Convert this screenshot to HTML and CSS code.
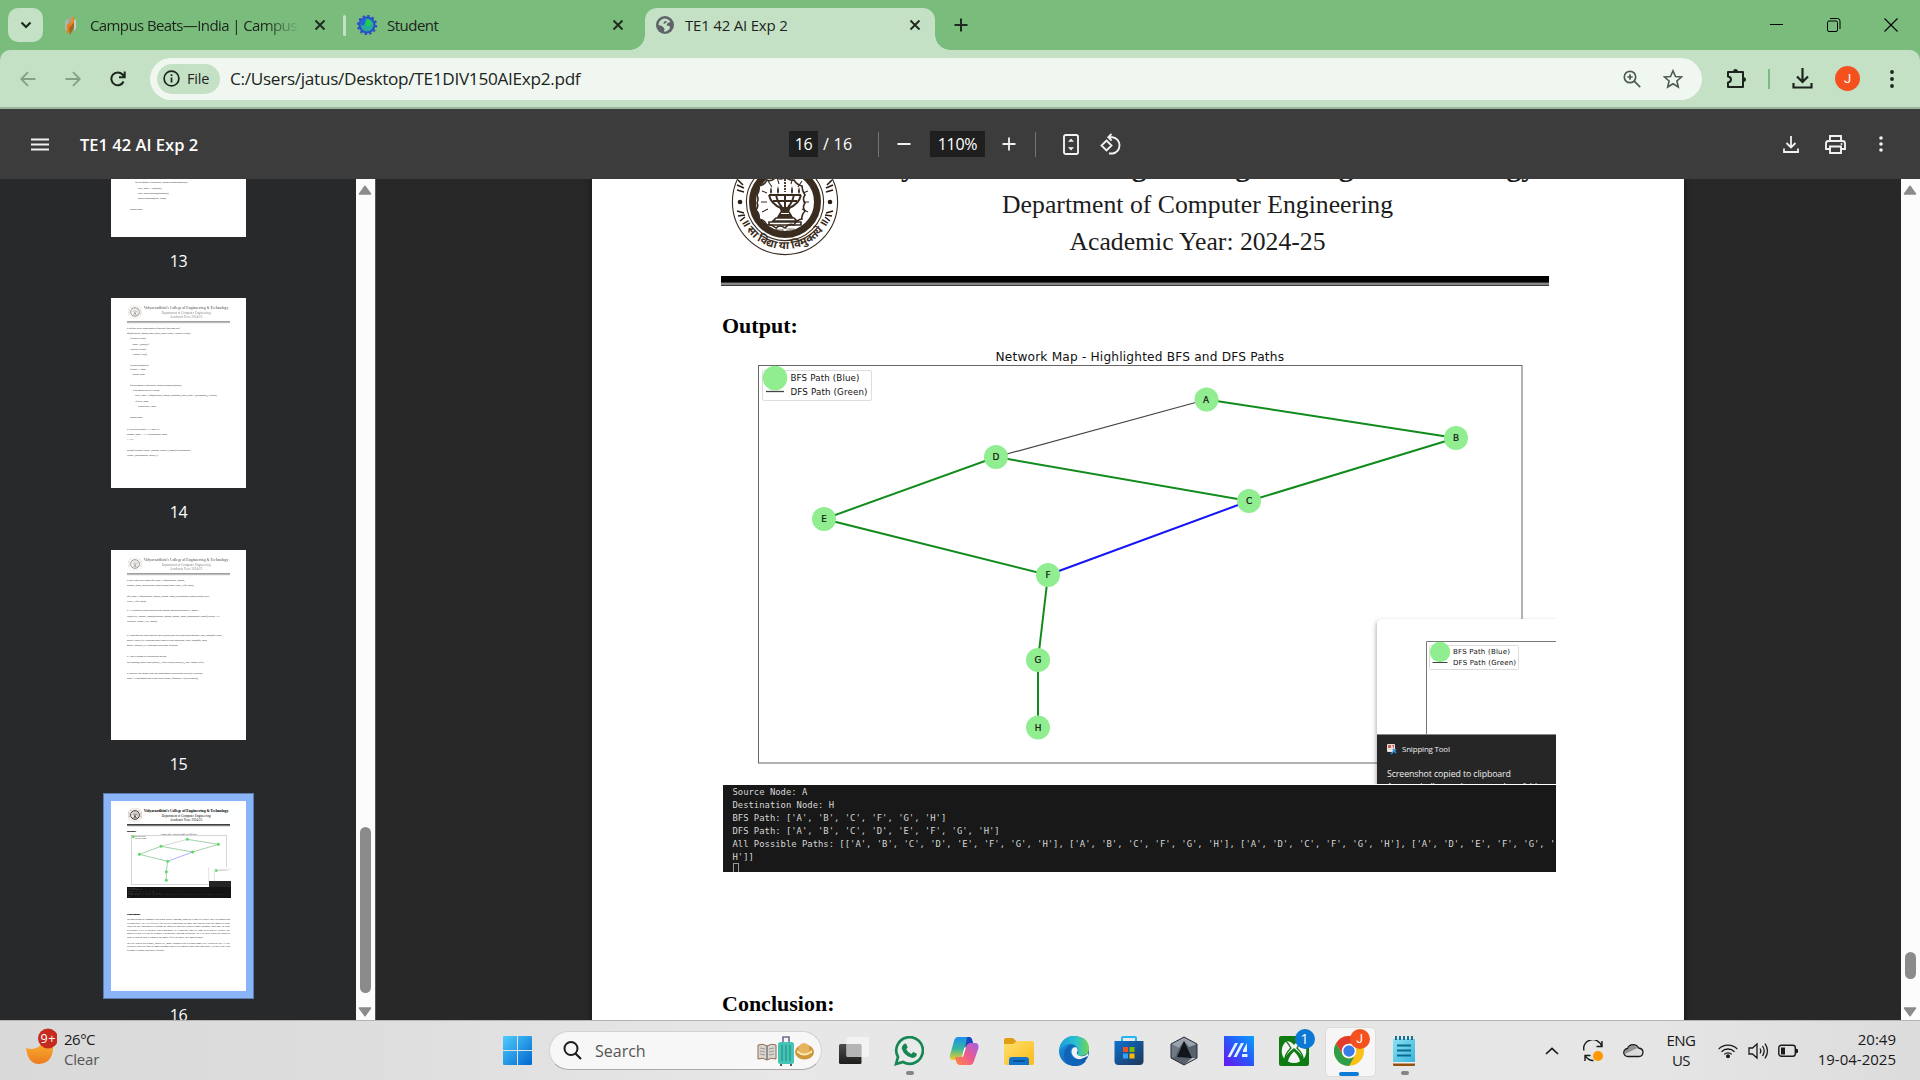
FILE: index.html
```html
<!DOCTYPE html>
<html lang="en">
<head>
<meta charset="utf-8">
<title>TE1 42 AI Exp 2</title>
<link rel="stylesheet" href="styles.css">
</head>
<body>
<svg class="defs" aria-hidden="true">
  <defs>
    <symbol id="x" viewBox="0 0 12 12"><path d="M1.5 1.5l9 9M10.5 1.5l-9 9" stroke="#1f2a20" stroke-width="1.9" fill="none"/></symbol>
    <symbol id="up" viewBox="0 0 14 10"><path d="M7 1.2L12.6 9H1.4z" fill="#8b8b8b" stroke="#8b8b8b" stroke-width="1.4" stroke-linejoin="round"/></symbol>
    <symbol id="down" viewBox="0 0 14 10"><path d="M7 8.8L12.6 1H1.4z" fill="#8b8b8b" stroke="#8b8b8b" stroke-width="1.4" stroke-linejoin="round"/></symbol>
    <symbol id="seal" viewBox="-55 -55 110 110">
      <g fill="none" stroke="#3b2c20">
        <circle r="52.6" stroke-width="1.1"/>
        <circle r="38.6" stroke-width="1.1"/>
        <circle r="32.500" stroke-width="7" />
        <path d="M-28-7q3-5 2-9q6-1 8-6q5 2 9-3q5 4 9 0q5 4 9 3q3 5 8 6q0 5 3 9q-3 4 0 8q-3 4 0 8q-4 4-3 8q-6 1-8 6q-5-2-9 3q-5-4-9 0q-5-4-9-3q-2-5-8-6q1-5-3-9q3-4 1-7q2-4 0-8z" fill="#fff" stroke="#3b2c20" stroke-width="1.6"/>
        <path d="M-24 0h6M18 0h6M-23-11l5 2M23-11l-5 2M-23 10l6-3M23 10l-6-3M-17-21l4 6M17-21l-4 6M-8-25l2 7M8-25l-2 7" stroke-width="1.1"/>
        <path d="M0-32v22" stroke-width="1.8" stroke-dasharray="2 1"/>
        <path d="M-16-7q2 9 12 13l1 4M16-7q-2 9-12 13l-1 4M-9-8q1 8 6 13M9-8q-1 8-6 13M-16-7h32M-12-1h24M0-8V10" stroke-width="2"/>
        <path d="M-4 10h8l3 5h-14zM-9 16h18l3 3h-24zM-16 20h32v3h-32z" stroke-width="1.600"/>
      </g>
      <path d="M-6 5h12l-3 6h-6zM-5 12h10l2 3h-14z" fill="#3b2c20"/>
      <path d="M-14-15q-2 5 0 7q2-2 0-7zM14-15q-2 5 0 7q2-2 0-7zM-7-16q-2 6 0 8q2-2 0-8zM7-16q-2 6 0 8q2-2 0-8z" fill="#3b2c20"/>
      <circle cx="-45" r="2.3" fill="#2a1d14"/><circle cx="45" r="2.3" fill="#2a1d14"/>
      <path d="M-48-17l7 3M-48-12l7 2M-47-22l5 5M48-17l-7 3M48-12l-7 2M47-22l-5 5M-48 9l7 2M-47 14l7-1M-45 19l5-4M48 9l-7 2M47 14l-7-1M45 19l-5-4M-37-34l5 6M37-34l-5 6M-33-38l5 6M33-38l-5 6" stroke="#2a1d14" stroke-width="1.6"/>
    </symbol>
    <symbol id="thumbhead" viewBox="0 0 405 90">
      <svg x="50" y="20" width="44" height="44" viewBox="-55 -55 110 110"><use href="#seal" x="-55" y="-55" width="110" height="110"/></svg>
      <text x="98" y="32" font-size="11.5" font-weight="700" textLength="254">Vidyavardhini's College of Engineering &amp; Technology</text>
      <text x="152" y="47" font-size="9.6" textLength="147">Department of Computer Engineering</text>
      <text x="177" y="61" font-size="9.6" textLength="97">Academic Year: 2024-25</text>
      <path d="M48 71.5h309" stroke="#000" stroke-width="4"/><path d="M48 74.500h309" stroke="#777" stroke-width="2"/>
    </symbol>
    <linearGradient id="gwin" x1="0" y1="0" x2="1" y2="1"><stop offset="0" stop-color="#4fcdfc"/><stop offset="1" stop-color="#0067cf"/></linearGradient>
    <linearGradient id="gmoon" x1="0" y1="0" x2="0" y2="1"><stop offset="0" stop-color="#fbbd3a"/><stop offset="1" stop-color="#ee7b1c"/></linearGradient>
    <linearGradient id="gfold" x1="0" y1="0" x2="1" y2="1"><stop offset="0" stop-color="#ffdf70"/><stop offset="1" stop-color="#f9bb17"/></linearGradient>
    <linearGradient id="gstore" x1="0" y1="0" x2="1" y2="1"><stop offset="0" stop-color="#0d72d0"/><stop offset="1" stop-color="#1f3557"/></linearGradient>
    <linearGradient id="gasus" x1="0" y1="1" x2="1" y2="0"><stop offset="0" stop-color="#6a16f2"/><stop offset=".5" stop-color="#2a55f8"/><stop offset="1" stop-color="#08a0ff"/></linearGradient>
    <linearGradient id="gcopa" x1="0" y1="0" x2="0" y2="1"><stop offset="0" stop-color="#1d8ff0"/><stop offset=".5" stop-color="#35b6a0"/><stop offset="1" stop-color="#f5cf28"/></linearGradient>
    <linearGradient id="gcopb" x1="1" y1="0" x2="0" y2="1"><stop offset="0" stop-color="#a061e8"/><stop offset=".5" stop-color="#ec5a92"/><stop offset="1" stop-color="#ff8b3c"/></linearGradient>
    <linearGradient id="gedge" x1="0" y1="0" x2="1" y2="0"><stop offset="0" stop-color="#1a9ddc"/><stop offset=".55" stop-color="#2cc0d0"/><stop offset="1" stop-color="#71d84d"/></linearGradient>
    <linearGradient id="gedge2" x1="0" y1="0" x2="1" y2="1"><stop offset="0" stop-color="#1e9ce4"/><stop offset="1" stop-color="#0a4a9c"/></linearGradient>
    <linearGradient id="gnote" x1="0" y1="0" x2="1" y2="1"><stop offset="0" stop-color="#8ae2f2"/><stop offset="1" stop-color="#38b4dc"/></linearGradient>
    <linearGradient id="gdark" x1="0" y1="0" x2="0" y2="1"><stop offset="0" stop-color="#4c4c4a"/><stop offset="1" stop-color="#1d1d1b"/></linearGradient>
  </defs>
</svg>

<header class="tabstrip">
  <button class="tabsearch"><svg width="12" height="8" viewBox="0 0 12 8"><path d="M1.500 1.500L6 6l4.500-4.500" fill="none" stroke="#1f2a20" stroke-width="2.200"/></svg></button>
  <div class="tab tab-one">
    <svg class="fav" width="22" height="22" viewBox="0 0 22 22"><path d="M6 7l3-2v9l-3 3z" fill="#a9b7ad"/><path d="M9 4l3-2v9l-3 3z" fill="#9aa79c"/><path d="M8 11l4-3v9l-4 3z" fill="#f07d13"/><path d="M12 5l3-3v9l-3 3z" fill="#f58a1c"/><path d="M10 14l5-6v6l-4 7z" fill="#a3672d"/><path d="M15 7l2-2v9l-2 3z" fill="#c7d0ca"/></svg>
    <span class="tabtitle faded">Campus Beats—India | Campus</span>
    <svg class="close" width="12" height="12"><use href="#x"/></svg>
  </div>
  <i class="tabsep"></i>
  <div class="tab tab-two">
    <svg class="fav" width="22" height="22" viewBox="0 0 22 22"><circle cx="11" cy="11" r="7.500" fill="#28a99b" stroke="#2a4fc4" stroke-width="2"/><circle cx="11" cy="11" r="9" fill="none" stroke="#2a4fc4" stroke-width="2.200" stroke-dasharray="2.400 2.310"/><circle cx="12" cy="9" r="3" fill="#20cf45"/><path d="M4 9q2-5 6-4l-1 5-3 2z" fill="#2563dc"/></svg>
    <span class="tabtitle t2">Student</span>
    <svg class="close" width="12" height="12"><use href="#x"/></svg>
  </div>
  <div class="tab active">
    <svg class="fav" width="22" height="22" viewBox="0 0 22 22"><circle cx="11" cy="11" r="9" fill="#5d6368"/><path d="M10 4.500c3 0 5 1 6.500 3.500l-3 1-1 2.500 3 .5.500 2c-1.500 2.500-3.500 3.800-6 3.800l.5-3.300-2.500-2.500-3.500-1c0-3 2-5.500 5.500-6.500z" fill="#c5e1c5"/><path d="M10 7.500l3-.5-1 2-2.500 1z" fill="#5d6368"/></svg>
    <span class="tabtitle t3">TE1 42 AI Exp 2</span>
    <svg class="close" width="12" height="12"><use href="#x"/></svg>
  </div>
  <svg class="newtab" width="14" height="14" viewBox="0 0 14 14"><path d="M7 .5v13M.5 7h13" stroke="#1f2a20" stroke-width="2"/></svg>
  <div class="wincontrols">
    <svg width="14" height="14" viewBox="0 0 14 14"><path d="M0 6.500h13" stroke="#000"/></svg>
    <svg width="14" height="14" viewBox="0 0 14 14"><rect x=".5" y="3" width="10" height="10.500" rx="1.500" fill="none" stroke="#000"/><path d="M3 .5h7.500q2.500 0 2.500 2.500v8" fill="none" stroke="#000"/></svg>
    <svg width="14" height="14" viewBox="0 0 14 14"><path d="M.5.500l13 13M13.500.500l-13 13" stroke="#000" stroke-width="1.100"/></svg>
  </div>
</header>

<div class="toolbarwrap">
<nav class="toolbar">
  <svg class="nav" width="16" height="16" viewBox="0 0 16 16"><path d="M15.500 8H1.500M8 1.200L1.200 8 8 14.800" fill="none" stroke="#83a186" stroke-width="1.800"/></svg>
  <svg class="nav" width="16" height="16" viewBox="0 0 16 16"><path d="M.5 8h14M8 1.200L14.800 8 8 14.800" fill="none" stroke="#83a186" stroke-width="1.800"/></svg>
  <svg class="nav" width="16" height="16" viewBox="0 0 16 16"><path d="M13.600 10.500A6.400 6.400 0 1 1 12.500 3.500L14.500 5.600M14.700.500v5.800H9" fill="none" stroke="#1c241d" stroke-width="2"/></svg>
  <div class="omnibox">
    <span class="chip"><svg width="17" height="17" viewBox="0 0 17 17"><circle cx="8.500" cy="8.500" r="7.400" fill="none" stroke="#1c241d" stroke-width="1.700"/><path d="M8.500 7.500v5M8.500 4.200v1.800" stroke="#1c241d" stroke-width="1.700"/></svg><b>File</b></span>
    <span class="url">C:/Users/jatus/Desktop/TE1DIV150AIExp2.pdf</span>
    <svg class="mag" width="18" height="18" viewBox="0 0 18 18"><circle cx="7" cy="7" r="5.700" fill="none" stroke="#4f5a52" stroke-width="1.700"/><path d="M11.200 11.200l6 6M7 4.300v5.400M4.300 7h5.400" stroke="#4f5a52" stroke-width="1.700"/></svg>
    <svg class="star" width="20" height="20" viewBox="0 0 20 20"><path d="M10 1.800l2.500 5.700 6 .5-4.600 4 1.400 6-5.300-3.200-5.300 3.200 1.400-6-4.600-4 6-.5z" fill="none" stroke="#4f5a52" stroke-width="1.600"/></svg>
  </div>
  <svg class="puzzle" width="21" height="21" viewBox="0 0 21 21"><path d="M2 4h15v15H2v-4.500q3-.5 3-3t-3-3z" fill="none" stroke="#1c241d" stroke-width="2" stroke-linejoin="round"/><path d="M7 4a2.500 3 0 0 1 5 0zM17 9a3 2.500 0 0 1 0 5z" fill="#1c241d"/></svg>
  <i class="toolsep"></i>
  <svg class="dl" width="21" height="21" viewBox="0 0 21 21"><path d="M10.500 0v13.500M5 8.500l5.500 5.500L16 8.500M1.500 15v4.500h18V15" fill="none" stroke="#1c241d" stroke-width="2.200"/></svg>
  <span class="avatar">J</span>
  <svg class="kebab" width="4" height="18" viewBox="0 0 4 18"><g fill="#1c241d"><circle cx="2" cy="2" r="1.900"/><circle cx="2" cy="9" r="1.900"/><circle cx="2" cy="16" r="1.900"/></g></svg>
</nav>
</div>

<section class="pdfbar">
  <svg class="burger" width="18" height="13" viewBox="0 0 18 13"><path d="M0 1.500h18M0 6.500h18M0 11.500h18" stroke="#f1f1f1" stroke-width="1.800"/></svg>
  <span class="pdftitle">TE1 42 AI Exp 2</span>
  <span class="field pageno">16</span><span class="pages">/ 16</span>
  <i class="psep s1"></i>
  <svg class="minus" width="14" height="14" viewBox="0 0 14 14"><path d="M.5 7h13" stroke="#f1f1f1" stroke-width="2"/></svg>
  <span class="field zoom">110%</span>
  <svg class="plus" width="14" height="14" viewBox="0 0 14 14"><path d="M7 .5v13M.5 7h13" stroke="#f1f1f1" stroke-width="1.800"/></svg>
  <i class="psep s2"></i>
  <svg class="fit" width="16" height="21" viewBox="0 0 16 21"><rect x="1" y="1" width="14" height="19" rx="1.800" fill="none" stroke="#f1f1f1" stroke-width="1.900"/><path d="M8 4.500l3 3.200H5zM8 16.500l3-3.200H5z" fill="#f1f1f1"/></svg>
  <svg class="rot" width="22" height="22" viewBox="0 0 22 22"><path d="M6.500 7.500l5 5-5 5-5-5zM11.500 1L8.300 4.200l3.300 3.500M9 4.200h3.500a7.900 8.200 0 0 1 0 16.300H9" fill="none" stroke="#f1f1f1" stroke-width="1.900"/></svg>
  <svg class="pdl" width="16" height="17" viewBox="0 0 16 17"><path d="M8 0v11M3.500 7L8 11.500 12.500 7M1 12.500V16h14v-3.500" fill="none" stroke="#f1f1f1" stroke-width="1.800"/></svg>
  <svg class="print" width="21" height="19" viewBox="0 0 21 19"><path d="M5 6V1h11v5M5 14H1V8.500Q1 6 3.500 6h14Q20 6 20 8.500V14h-4M5 11.500h11V18H5z" fill="none" stroke="#f1f1f1" stroke-width="1.900"/><circle cx="16.500" cy="9" r="1" fill="#f1f1f1"/></svg>
  <svg class="kebab2" width="4" height="16" viewBox="0 0 4 16"><g fill="#f1f1f1"><circle cx="2" cy="2" r="1.800"/><circle cx="2" cy="8" r="1.800"/><circle cx="2" cy="14" r="1.800"/></g></svg>
</section>

<main class="viewer">
  <aside class="sidebar">
    <svg class="thumb t13" width="135" height="58" viewBox="0 396 405 174"><g class="code">
      <text x="73" y="408" textLength="158">for neighbor in network_graph.neighbors(node):</text>
      <text x="81" y="426" textLength="70">new_path = list(path)</text>
      <text x="81" y="441" textLength="92">new_path.append(neighbor)</text>
      <text x="81" y="456" textLength="84">queue.append(new_path)</text>
      <text x="57" y="489" textLength="38">return None</text></g></svg>
    <span class="num">13</span>
    <svg class="thumb" width="135" height="190" viewBox="0 0 405 570"><use href="#thumbhead" width="405" height="90" opacity=".5"/><g class="code">
      <text x="48" y="93" textLength="158"># Define DFS algorithm to find the first path def</text>
      <text x="48" y="108" textLength="192">dfs(network_graph, start, goal, path=None, visited=None):</text>
      <text x="57" y="123" textLength="49">if path is None:</text>
      <text x="65" y="141" textLength="49">path = [start] if</text>
      <text x="57" y="156" textLength="50">visited is None:</text>
      <text x="65" y="171" textLength="43">visited = set()</text>
      <text x="57" y="204" textLength="55">visited.add(start)</text>
      <text x="57" y="216" textLength="49">if start == goal:</text>
      <text x="65" y="231" textLength="36">return path</text>
      <text x="57" y="264" textLength="156">for neighbor in network_graph.neighbors(start):</text>
      <text x="65" y="279" textLength="82">if neighbor not in visited:</text>
      <text x="73" y="294" textLength="244">new_path = dfs(network_graph, neighbor, goal, path + [neighbor], visited)</text>
      <text x="73" y="312" textLength="41">if new_path:</text>
      <text x="81" y="327" textLength="54">return new_path</text>
      <text x="57" y="360" textLength="38">return None</text>
      <text x="48" y="396" textLength="100"># Test with nodes "A" and "H"</text>
      <text x="48" y="411" textLength="121">source_node = "A" destination_node</text>
      <text x="48" y="426" textLength="20">= "H"</text>
      <text x="48" y="459" textLength="190">print(f"Source Node: {source_node}") print(f"Destination</text>
      <text x="48" y="474" textLength="93">Node: {destination_node}")</text></g></svg>
    <span class="num">14</span>
    <svg class="thumb" width="135" height="190" viewBox="0 0 405 570"><use href="#thumbhead" width="405" height="90" opacity=".5"/><g class="code">
      <text x="48" y="93" textLength="173"># BFS and DFS paths bfs_path = bfs(network_graph,</text>
      <text x="48" y="108" textLength="200">source_node, destination_node) print("BFS Path:", bfs_path)</text>
      <text x="48" y="141" textLength="246">dfs_path = dfs(network_graph, source_node, destination_node) print("DFS</text>
      <text x="48" y="156" textLength="57">Path:", dfs_path)</text>
      <text x="48" y="183" textLength="218"># All possible paths between the source and destination all_paths =</text>
      <text x="48" y="201" textLength="277">list(nx.all_simple_paths(network_graph, source_node, destination_node)) print("All</text>
      <text x="48" y="216" textLength="90">Possible Paths:", all_paths)</text>
      <text x="48" y="258" textLength="285"># Highlight the best path for BFS (blue) and DFS (green) highlight_best_path(bfs_path,</text>
      <text x="48" y="273" textLength="241">color="blue") # Highlight BFS path in blue highlight_best_path(dfs_path,</text>
      <text x="48" y="288" textLength="152">color="green") # Highlight DFS path in green</text>
      <text x="48" y="321" textLength="118"># Add a legend to explain the colors</text>
      <text x="48" y="339" textLength="231">plt.legend(["BFS Path (Blue)", "DFS Path (Green)"], loc="upper left")</text>
      <text x="48" y="372" textLength="227"># Display the graph with the highlighted best paths plt.title("Network</text>
      <text x="48" y="387" textLength="213">Map - Highlighted BFS and DFS Paths", fontsize=14) plt.show()</text></g></svg>
    <span class="num">15</span>
    <div class="selected"><svg class="thumb" width="135" height="190" viewBox="0 0 405 570"><use href="#thumbhead" width="405" height="90"/>
      <text x="48" y="93" font-size="8" font-weight="700" stroke="#000" stroke-width=".4">Output:</text>
      <text x="150" y="101" font-size="5" fill="#333" textLength="108" font-family="DejaVu Sans">Network Map - Highlighted BFS and DFS Paths</text>
      <rect x="61" y="103" width="286" height="147" fill="none" stroke="#999" stroke-width="1.200"/>
      <path d="M150 136L229 115" stroke="#999" stroke-width="1.200"/>
      <path d="M229 115L322 130 245 153 150 136 85 160 170 181 166 212V238" stroke="#3b9b49" fill="none" stroke-width="1.400"/>
      <path d="M170 181L245 153" stroke="#5555ff" stroke-width="1.400"/>
      <g fill="#5fd968"><circle cx="229" cy="115" r="4.500"/><circle cx="322" cy="130" r="4.500"/><circle cx="245" cy="153" r="4.500"/><circle cx="150" cy="136" r="4.500"/><circle cx="85" cy="160" r="4.500"/><circle cx="170" cy="181" r="4.500"/><circle cx="166" cy="212" r="4.500"/><circle cx="166" cy="238" r="4.500"/><circle cx="67" cy="107" r="4.500"/></g>
      <g font-size="4" fill="#222" font-family="DejaVu Sans"><text x="73" y="109">BFS Path (Blue)</text><text x="73" y="114">DFS Path (Green)</text></g>
      <rect x="293" y="197" width="67" height="60" fill="#fff"/><path d="M293 199v44M310 243v-38h50" stroke="#aaa" fill="none"/><circle cx="316" cy="209" r="4" fill="#5fd968"/><text x="322" y="210" font-size="3.500" font-family="DejaVu Sans">BFS Path (Blue)</text>
      <rect x="294" y="240" width="66" height="18" fill="#252525"/><rect x="48" y="258" width="312" height="33" fill="#141414"/>
      <g font-size="3.300" fill="#aaa" font-family="DejaVu Sans Mono"><text x="52" y="263">Source Node: A</text><text x="52" y="268">Destination Node: H</text><text x="52" y="273">BFS Path: ['A', 'B', 'C', 'F', 'G', 'H']</text><text x="52" y="278">DFS Path: ['A', 'B', 'C', 'D', 'E', 'F', 'G', 'H']</text><text x="52" y="283" textLength="304">All Possible Paths: [['A', 'B', 'C', 'D', 'E', 'F', 'G', 'H'], ['A', 'B', 'C', 'F', 'G', 'H'], ['A', 'D', 'C', 'F', 'G', 'H'], ['A', 'D', 'E', 'F', 'G', '</text><text x="52" y="288">H']]</text></g>
      <text x="48" y="342" font-size="8" font-weight="700" stroke="#000" stroke-width=".4">Conclusion:</text>
      <g font-size="8.200" fill="#222">
      <text x="48" y="357" textLength="309">In conclusion of computer network packet routing, both BFS and DFS have their strengths and</text>
      <text x="48" y="368" textLength="309">weaknesses. DFS is effective for deep exploration but may not always find the shortest path,</text>
      <text x="48" y="379" textLength="309">whereas BFS guarantees finding the shortest path but requires more memory and time in large</text>
      <text x="48" y="390" textLength="309">networks. DFS is suitable when memory is a concern, and we don't necessarily require the</text>
      <text x="48" y="400" textLength="309">shortest path. It's useful in more exploratory routing scenarios. BFS is ideal when the shortest</text>
      <text x="48" y="411" textLength="229">path is crucial and it ensures the most efficient route in terms of hops.</text>
      <text x="48" y="429" textLength="309">In real-world networks, however, more sophisticated algorithms like Dijkstra's or A* are</text>
      <text x="48" y="439" textLength="309">typically used to find the most optimal routes in terms of both time and space, as they take into</text>
      <text x="48" y="450" textLength="112">account weights and other factors.</text></g></svg></div>
    <span class="num last">16</span>
  </aside>
  <div class="scroll side"><svg width="14" height="10"><use href="#up"/></svg><i></i><svg width="14" height="10"><use href="#down"/></svg></div>

  <div class="canvas">
    <article class="page">
      <svg class="letterhead" width="1092" height="107" viewBox="592 179 1092 107">
        <use href="#seal" x="730" y="147" width="110" height="110"/>
        <path id="arc" d="M741.500 222A48.500 48.500 0 0 0 828.500 222" fill="none"/>
        <text class="motto"><textPath href="#arc" startOffset="50%" text-anchor="middle">॥ सा विद्या या विमुक्तये ॥</textPath></text>
        <text x="785" y="231" font-size="4" text-anchor="middle" fill="#3b2c20" font-family="Liberation Sans">Estd. 1999</text>
        <g fill="#1c1c1c"><text x="856" y="175.500" font-size="29.500" font-weight="700" textLength="680">Vidyavardhini's College of Engineering &amp; Technology</text>
        <text x="1002" y="213" font-size="25.700" textLength="391">Department of Computer Engineering</text>
        <text x="1069.500" y="250" font-size="25.700" textLength="256">Academic Year: 2024-25</text></g>
        <path d="M721 279h828" stroke="#000" stroke-width="6"/><path d="M721 282.500h828M721 285.500h828" stroke="#3c3c3c"/><path d="M721 284h828" stroke="#858585" stroke-width="2"/>
      </svg>
      <h2 class="out">Output:</h2>
      <svg class="chart" width="1092" height="442" viewBox="592 343 1092 442">
        <rect x="758.500" y="365.500" width="763.500" height="397.500" fill="none" stroke="#666"/>
        <text x="995.500" y="360.500" font-size="12.200" textLength="288.500">Network Map - Highlighted BFS and DFS Paths</text>
        <rect x="762.500" y="370.500" width="109" height="30" rx="1.500" fill="#fff" stroke="#ddd"/>
        <circle cx="775" cy="378" r="12.300" fill="#90ee90"/><path d="M766 391.500h18" stroke="#444" stroke-width="1.300"/>
        <text x="790.500" y="381" font-size="8.700" textLength="69">BFS Path (Blue)</text>
        <text x="790.500" y="395" font-size="8.700" textLength="77">DFS Path (Green)</text>
        <path d="M1206.500 399.500L996 457" stroke="#444" stroke-width="1.200"/>
        <path d="M1206.500 399.500L1456 438 1249 501 996 457 824 519 1048 575 1038 660V728" stroke="#118c1c" stroke-width="2" fill="none"/>
        <path d="M1048 575L1249 501" stroke="#1414f5" stroke-width="2"/>
        <g fill="#90ee90"><circle cx="1206.500" cy="399.500" r="12"/><circle cx="1456" cy="438" r="12"/><circle cx="1249" cy="501" r="12"/><circle cx="996" cy="457" r="12"/><circle cx="824" cy="519" r="12"/><circle cx="1048" cy="575" r="12"/><circle cx="1038" cy="660" r="12"/><circle cx="1038" cy="727.500" r="12"/></g>
        <g font-size="8.900" text-anchor="middle" stroke="#111" stroke-width=".2"><text x="1206" y="402.500">A</text><text x="1456" y="441">B</text><text x="1249" y="504">C</text><text x="996" y="460">D</text><text x="824" y="522">E</text><text x="1048" y="578">F</text><text x="1038" y="663">G</text><text x="1038" y="730.500">H</text></g>
        <svg x="1365" y="612" width="191" height="172" viewBox="1365 612 191 172">
          <path class="shade" d="M1377 790V624q0-5 5-5h180v171z"/>
          <path d="M1426.500 735v-93.500H1560" fill="none" stroke="#777"/>
          <rect x="1429.500" y="645.500" width="89" height="24" rx="1" fill="#fff" stroke="#ddd"/>
          <circle cx="1440" cy="652" r="10.200" fill="#90ee90"/><path d="M1432.500 662.500h15" stroke="#444"/>
          <text x="1453" y="654" font-size="7" textLength="57">BFS Path (Blue)</text>
          <text x="1453" y="665" font-size="7" textLength="63">DFS Path (Green)</text>
          <rect x="1377" y="735" width="180" height="50" fill="#262626"/><path d="M1377 734.500h180" stroke="#888"/>
          <rect x="1387" y="744" width="8" height="8" rx="1" fill="#e8e0dc"/><path d="M1388 745h3v3h-3zM1392 745h2v4" fill="#d8604c"/><path d="M1391 754l5-5M1393 749l3 4" stroke="#2f8fd8" stroke-width="1.500"/>
          <g fill="#eee" font-family="Open Sans"><text x="1402" y="751.500" font-size="8" textLength="48">Snipping Tool</text>
          <text x="1387" y="776.500" font-size="8.800" textLength="124">Screenshot copied to clipboard</text>
          <text x="1387" y="789.500" font-size="8.800" textLength="160">Automatically saved to screenshots folder.</text></g>
        </svg>
      </svg>
      <pre class="terminal">Source Node: A
Destination Node: H
BFS Path: ['A', 'B', 'C', 'F', 'G', 'H']
DFS Path: ['A', 'B', 'C', 'D', 'E', 'F', 'G', 'H']
All Possible Paths: [['A', 'B', 'C', 'D', 'E', 'F', 'G', 'H'], ['A', 'B', 'C', 'F', 'G', 'H'], ['A', 'D', 'C', 'F', 'G', 'H'], ['A', 'D', 'E', 'F', 'G', '
H']]
<i></i></pre>
      <h2 class="concl">Conclusion:</h2>
    </article>
  </div>
  <div class="scroll main"><svg width="14" height="10"><use href="#up"/></svg><i></i><svg width="14" height="10"><use href="#down"/></svg></div>
</main>

<footer class="taskbar">
  <div class="weather">
    <svg width="36" height="40" viewBox="0 0 36 40"><path d="M5 22q8 3 15-3 6-4 7-9 6 4 5 13-1 14-14 15-11 0-13-16z" fill="url(#gmoon)"/><circle cx="27" cy="12.500" r="10" fill="#c52b1e"/><text x="27" y="17" font-size="12.500" fill="#fff" text-anchor="middle" textLength="15">9+</text></svg>
    <div><span>26°C</span><span class="dim">Clear</span></div>
  </div>
  <span class="cell win"><svg width="29" height="29" viewBox="0 0 29 29"><path d="M0 1q0-1 1-1h13v14H0zM15 0h13q1 0 1 1v13H15zM0 15h14v14H1q-1 0-1-1zM15 15h14v13q0 1-1 1H15z" fill="url(#gwin)"/></svg></span>
  <div class="search">
    <svg width="19" height="19" viewBox="0 0 19 19"><circle cx="8" cy="7.500" r="6.500" fill="none" stroke="#1c1c1c" stroke-width="2"/><path d="M12.500 12.500l5.500 5.500" stroke="#1c1c1c" stroke-width="2.200"/></svg>
    <span>Search</span>
    <svg class="trip" width="58" height="32" viewBox="0 0 58 32"><path d="M1 10q5-2 9 1 4-3 9-1v14q-5-2-9 1-4-3-9-1z" fill="#d9d5cf" stroke="#8d6c50"/><path d="M10 11v14" stroke="#777" stroke-width="1.500"/><path d="M3 13l5 1M3 16l5 1M3 19l5 1M12 14l5-1M12 17l5-1M12 20l5-1" stroke="#999"/><path d="M26 8V2h6v6" fill="none" stroke="#6d6b91" stroke-width="1.600"/><rect x="21" y="7" width="16" height="22" rx="2.500" fill="#45c3b4"/><path d="M25 10v16M29 10v16M33 10v16" stroke="#259488" stroke-width="1.200"/><path d="M24 29v2M34 29v2" stroke="#465" stroke-width="2"/><ellipse cx="47.500" cy="17" rx="9.500" ry="7.500" fill="#d0963c"/><ellipse cx="47" cy="14" rx="5.500" ry="6" fill="#e5b45c"/><path d="M40 15q7 7 15 0v2.500q-8 6-15 0z" fill="#fbe8b4"/></svg>
  </div>
  <div class="apps">
    <span class="cell"><svg width="30" height="30" viewBox="0 0 30 30"><rect x="0" y="8" width="22.500" height="20" rx="1.500" fill="url(#gdark)"/><rect x="7.500" y="1" width="22.500" height="20" rx="1.500" fill="#f5f5f5" opacity=".82"/><path d="M7.500 8H21q1.500 0 1.500 1.500V21H9q-1.500 0-1.500-1.500z" fill="#b5b5b5"/></svg></span>
    <span class="cell"><svg width="30" height="30" viewBox="0 0 30 30"><path d="M2 28l2-7A13.300 13.300 0 1 1 9 26z" fill="#e9ebea" stroke="#168653" stroke-width="2.700"/><path d="M9.500 8.500q2-2 3 0l1.200 2.800q-.7 1.500-1.500 2 1.800 3.500 5.200 4.700l1.700-2q1 0 3.400 1.500 1 1-.6 3-2.200 2-5 1.100-7-2-9.100-9.100-.2-2.300 1.700-4z" fill="#168653"/></svg><i class="run"></i></span>
    <span class="cell"><svg width="30" height="30" viewBox="0 0 30 30"><path d="M9 1h10q3 0 4 4l1 5h-5q-3 0-4 4l-2 8q-1 2-4 2H4q-4 0-3-5L5 5q1-4 4-4z" fill="url(#gcopa)"/><path d="M18 1h2q3 0 3.500 4l1.500 5h-5q-3 0-4 3z" fill="#1947bf"/><path d="M21 29H11q-3 0-4-4l-1-4h5q3 0 4-4l2-6q1-4 5-4h4q4 0 3.500 5L25 25q-1 4-4 4z" fill="url(#gcopb)"/><path d="M17 11l-3 10h-1l2-8q1-2 2-2z" fill="#fff"/></svg></span>
    <span class="cell"><svg width="30" height="30" viewBox="0 0 30 30"><path d="M0 4q0-2 2-2h7l4 4v5H0z" fill="#e09e12"/><path d="M0 8h9l4-3h15q2 0 2 2v20q0 2-2 2H2q-2 0-2-2z" fill="url(#gfold)"/><path d="M5 29v-5q0-3 3-3h14q3 0 3 3v5z" fill="#1274c8"/><path d="M9 25h12" stroke="#0b4b93" stroke-width="1.800"/></svg></span>
    <span class="cell"><svg width="30" height="30" viewBox="0 0 30 30"><circle cx="15" cy="15" r="15" fill="url(#gedge2)"/><path d="M.5 13Q3 0 16 0q14 1 14 13 0 6-8 7-3 0-4-1 3-4 0-8-6-6-13-1-3 2-4.500 5z" fill="url(#gedge)"/><path d="M18 11q-7-3-7 5 1 9 10 9h6q-5 6-13 5Q4 27 5 17q2-8 9-8z" fill="#1064b8"/><path d="M17 11q-5 0-4.500 6Q15 24 22 23l7-3v-3q-3 4-8 3-4-1-3-4 2-2-1-5z" fill="#eef2f4"/></svg></span>
    <span class="cell"><svg width="30" height="30" viewBox="0 0 30 30"><path d="M8 6V2q0-1 1-1h12q1 0 1 1v4" fill="none" stroke="#21b5f1" stroke-width="2"/><path d="M.5 5h29v20q0 4-4 4h-21q-4 0-4-4z" fill="url(#gstore)"/><path d="M9 11h5v5H9z" fill="#f25022"/><path d="M15.500 11h5v5h-5z" fill="#7fba00"/><path d="M9 17.500h5v5H9z" fill="#2ea5ef"/><path d="M15.500 17.500h5v5h-5z" fill="#ffb900"/></svg></span>
    <span class="cell"><svg width="30" height="30" viewBox="0 0 30 30"><path d="M15 1l13 7v14l-13 7-13-7V8z" fill="#57616b"/><path d="M15 1l13 7-8 3-5-6-5 7-8-4z" fill="#9aa3ad"/><path d="M2 8l8 4-4 9-4 1z" fill="#707a84"/><path d="M15 5l8 17-15-1z" fill="#12161a"/><path d="M15 29l8-7 5 0z" fill="#c2c7cc"/><path d="M15 1l13 7v14l-13 7-13-7V8z" fill="none" stroke="#2a2f36"/></svg></span>
    <span class="cell"><svg width="30" height="30" viewBox="0 0 30 30"><rect width="30" height="30" fill="url(#gasus)"/><path d="M3.500 21L11 7h3L6.500 21zM9.500 21L17 7h3l-7.500 14zM19 14l4-7v9h-4z" fill="#dff3ff"/><path d="M18 18h5.500v3H18z" fill="#dff3ff"/></svg></span>
    <span class="cell"><svg width="30" height="30" viewBox="0 0 30 30"><rect width="30" height="30" rx="2" fill="#117b13"/><circle cx="15" cy="15" r="12.300" fill="#f5f5f5"/><path d="M7 5q5 0 8 4 3-4 8-4-3-3-8-3T7 5zM15 12Q5 20 5.500 24 9 29 15 29t9.500-5Q25 20 15 12z" fill="#117b13"/><path d="M15 15.500Q10 20 9 25.500q6 3 12 0Q20 20 15 15.500z" fill="#f5f5f5"/><path d="M7 5q2 2 5 7-7 7-6 12M23 5q-2 2-5 7 7 7 6 12" fill="none" stroke="#117b13" stroke-width="1.300"/></svg><b class="badge blue">1</b></span>
    <span class="cell chrome"><svg width="30" height="30" viewBox="-15 -15 30 30"><circle r="15" fill="#fbc116"/><path d="M-13-7.500A15 15 0 0 1 13-7.500H0L-6.500 3.700z" fill="#e33b2e"/><path d="M-13-7.500A15 15 0 0 0 0 15L6.500 3.800A7.500 7.500 0 0 1-6.500 3.800z" fill="#2f9e4b"/><circle r="7.300" fill="#fff"/><circle r="5.700" fill="#3b7de8"/></svg><b class="badge orange">J</b><i class="run on"></i></span>
    <span class="cell"><svg width="30" height="30" viewBox="0 0 30 30"><path d="M4 3h22v23H4z" fill="url(#gnote)"/><path d="M4 26h22v3q0 1-1 1H5q-1 0-1-1z" fill="#95500f"/><path d="M4 26h22v1.500H4z" fill="#eee"/><path d="M7 0v4M11 0v4M15 0v4M19 0v4M23 0v4" stroke="#0d6a8f" stroke-width="1.900"/><path d="M8 9.500h14M8 14.500h14M8 19.500h14" stroke="#0d6a8f" stroke-width="1.900"/></svg><i class="run"></i></span>
  </div>
  <div class="tray">
    <svg width="14" height="8" viewBox="0 0 14 8"><path d="M1 7l6-5.700L13 7" fill="none" stroke="#1a1a1a" stroke-width="1.700"/></svg>
    <svg class="sync" width="21" height="22" viewBox="0 0 21 22"><path d="M1 10.500A9 8.500 0 0 1 18.500 6M19 1v5.500h-5.500M2 21v-5.500h5.500M2.500 16.500q4 4.500 8 4" fill="none" stroke="#1a1a1a" stroke-width="1.400"/><circle cx="15" cy="16" r="5" fill="#ff9800"/></svg>
    <svg class="cloud" width="21" height="15" viewBox="0 0 21 15"><path d="M5 13.500A4 4 0 0 1 4.500 5.500 6 6 0 0 1 15.500 5Q20 5.500 20 9.500q-.5 4-4 4z" fill="#dcdcdc"/><path d="M2 11L14.500 5Q9-1 5 5.500 0 6 2 11z" fill="#929292"/><path d="M5 13.500A4 4 0 0 1 4.500 5.500 6 6 0 0 1 15.500 5Q20 5.500 20 9.500q-.5 4-4 4z" fill="none" stroke="#1a1a1a" stroke-width="1.300"/></svg>
    <div class="lang"><span>ENG</span><span>US</span></div>
    <svg class="wifi" width="20" height="16" viewBox="0 0 20 16"><path d="M.7 6a13 13 0 0 1 18.600 0M3.500 8.700a9.200 9.200 0 0 1 13 0M6.300 11.400a5.200 5.200 0 0 1 7.400 0" fill="none" stroke="#1a1a1a" stroke-width="1.300"/><circle cx="10" cy="13.300" r="2" fill="#1a1a1a"/></svg>
    <svg class="vol" width="21" height="18" viewBox="0 0 21 18"><path d="M1 6h3.500L9 2v14l-4.500-4H1zM12 6.500q1.600 2.500 0 5M14.500 4q3.400 5 0 10M17 1.700q5 7.300 0 14.600" fill="none" stroke="#1a1a1a" stroke-width="1.300"/></svg>
    <svg class="bat" width="21" height="14" viewBox="0 0 21 14"><rect x=".8" y="1.300" width="16.500" height="11" rx="2.500" fill="none" stroke="#1a1a1a" stroke-width="1.400"/><path d="M3 3.500h4v7H3zM18 4.500l2 1v3l-2 1z" fill="#1a1a1a"/></svg>
    <div class="clock"><span>20:49</span><span>19-04-2025</span></div>
  </div>
</footer>
</body>
</html>
```

FILE: styles.css
```css
* { box-sizing: border-box; }
body {
  margin: 0; width: 1920px; height: 1080px; overflow: hidden;
  display: flex; flex-direction: column;
  font-family: "Open Sans", "Noto Sans", sans-serif; font-size: 15px; color: #1c241d;
}
svg { display: block; flex: none; }
i { display: block; flex: none; }
.defs { position: absolute; width: 0; height: 0; }

/* tab strip */
.tabstrip { height: 50px; flex: none; display: flex; align-items: center; background: #7abc7c; }
.tabsearch { width: 35px; height: 34px; margin-left: 8px; border: 0; border-radius: 10px; background: #c5e1c5; display: grid; place-items: center; padding: 0; }
.tab { display: flex; align-items: center; height: 42px; }
.tab-one { margin-left: 16px; width: 284px; }
.tab-two { margin-left: 10px; width: 288px; }
.tabtitle { margin-left: 9px; white-space: nowrap; overflow: hidden; flex: 1; font-size: 15px; letter-spacing: -.55px; }
.t2 { letter-spacing: -.5px; }
.t3 { letter-spacing: -.2px; }
.faded { letter-spacing: -.6px; -webkit-mask-image: linear-gradient(90deg, #000 175px, transparent 210px); mask-image: linear-gradient(90deg, #000 175px, transparent 210px); }
.close { margin-right: 17px; }
.tab-two .close { margin-right: 20px; }
.tabsep { width: 3px; height: 21px; background: #c5e1c5; border-radius: 2px; }
.active { position: relative; margin: 8px 0 0 1px; width: 290px; padding-left: 9px; background: #c5e1c5; border-radius: 12px 12px 0 0; align-items: center; padding-bottom: 8px; }
.active .close { margin-right: 14px; }
.active::before, .active::after { content: ""; position: absolute; bottom: 0; width: 15px; height: 15px; }
.active::before { left: -15px; background: radial-gradient(circle at 0 0, #7abc7c 14.5px, #c5e1c5 15px); }
.active::after { right: -15px; background: radial-gradient(circle at 100% 0, #7abc7c 14.5px, #c5e1c5 15px); }
.newtab { margin-left: 19px; }
.wincontrols { display: flex; gap: 43px; margin-left: auto; margin-right: 22px; }

/* address bar */
.toolbarwrap { background: #7abc7c; flex: none; height: 59px; }
.toolbar { height: 59px; display: flex; align-items: center; background: #c5e1c5; border-bottom: 2px solid #9ab59c; border-radius: 10px 10px 0 0; padding-left: 20px; }
.nav { margin-right: 29px; }
.omnibox { width: 1552px; height: 42px; margin-left: -5px; border-radius: 21px; background: #f0f7f0; display: flex; align-items: center; padding-left: 7px; }
.chip { width: 63px; height: 30px; border-radius: 15px; background: #c5e1c5; display: flex; align-items: center; padding-left: 6px; gap: 7px; }
.chip b { font-weight: 500; font-size: 14.5px; letter-spacing: -.2px; }
.url { margin-left: 10px; font-size: 17.2px; letter-spacing: -.3px; white-space: nowrap; }
.mag { margin-left: auto; margin-right: 22px; }
.star { margin-right: 19px; }
.puzzle { margin-left: 24px; margin-right: 21px; }
.toolsep { width: 2px; height: 20px; background: #7abc7c; }
.dl { margin-left: 22px; }
.avatar { width: 25px; height: 25px; margin-left: 22px; border-radius: 50%; background: #f4511e; color: #fff; font: 13px/25px Roboto, sans-serif; text-align: center; }
.kebab { margin-left: 30px; }

/* pdf toolbar */
.pdfbar { height: 70px; flex: none; display: flex; align-items: center; background: #3c3c3c; color: #fff; padding: 0 0 0 31px; }
.pdftitle { width: 709px; margin-left: 31px; font-weight: 600; font-size: 16.5px; letter-spacing: .02px; }
.field { height: 26px; line-height: 26px; background: #1f1f1f; text-align: center; }
.pageno { width: 29px; }
.pages { width: 37px; margin-left: 5px; white-space: nowrap; }
.field, .pages { font-size: 16px; letter-spacing: -.3px; }
.pages { letter-spacing: .3px; }
.psep { width: 1px; height: 25px; background: #747474; }
.s1 { margin-left: 18px; }
.minus { margin-left: 18px; margin-right: 19px; }
.zoom { width: 55px; }
.plus { margin-left: 17px; }
.s2 { margin-left: 19px; }
.fit { margin-left: 27px; }
.rot { margin-left: 21px; }
.pdl { margin-left: auto; }
.print { margin-left: 26px; }
.kebab2 { margin-left: 33px; margin-right: 37px; }

/* viewer */
.viewer { height: 841px; flex: none; display: flex; overflow: hidden; background: #282828; }
.sidebar { width: 356px; background: #28292b; display: flex; flex-direction: column; align-items: center; color: #fff; overflow: hidden; }
.thumb { background: #fff; font-family: "Liberation Serif", serif; }
.code { font-size: 8.5px; fill: #777; stroke: #777; stroke-width: .25px; }
.sidebar .num, .sidebar .thumb, .selected { margin-left: 1px; flex: none; }
.num { height: 61px; padding-top: 12px; line-height: 25px; font-size: 16px; letter-spacing: -.5px; }
.sidebar .selected { margin-top: -8px; width: 151px; background: #8ab4f8; border: 1px solid #5b7db4; padding: 7px; }
.selected .thumb { margin: 0 !important; }
.last { margin-top: -8px; }
.num:nth-of-type(2) { height: 62px; }
.scroll { width: 19px; background: #fcfcfc; display: flex; flex-direction: column; align-items: center; padding: 6px 0 3px; }
.scroll i { width: 11px; border-radius: 6px; background: #8b8b8b; }
.side { width: 20px; padding-right: 1px; border-right: 1px solid #545454; }
.side i { height: 166px; margin-top: 632px; margin-bottom: auto; }
.main { padding-right: 1px; }
.main i { height: 27px; margin-top: 757px; margin-bottom: auto; }
.canvas { width: 1525px; display: flex; padding-left: 216px; }
.page { width: 1092px; height: 900px; background: #fff; flex: none; box-shadow: 0 0 6px #111; font-family: "Liberation Serif", serif; color: #000; }
.page h2 { margin: 0; font-size: 22px; line-height: 24px; padding-left: 130px; }
.out { height: 57px; padding-top: 28px; }
.chart { font-family: "DejaVu Sans", sans-serif; fill: #111; }
.shade { fill: #fff; filter: drop-shadow(-1px 2px 2px rgba(0,0,0,.3)); }
.motto { font: 700 11px "Noto Sans Devanagari", "Noto Sans", sans-serif; fill: #3b2c20; }
.terminal { margin: 0 0 0 131px; width: 833px; height: 87px; overflow: hidden; padding: 1px 0 0 9.500px; background: #181818; color: #d6d6d6; font: 8.880px/13px "DejaVu Sans Mono", monospace; }
.terminal i { width: 6px; height: 12px; margin-top: -1px; border: 1px solid #999; }
.concl { padding-top: 120px; }

/* taskbar */
.taskbar { height: 60px; flex: none; display: flex; align-items: center; border-top: 1px solid #b4b4b4; background: linear-gradient(90deg, #d9d9d9, #dedede 20%, #e7e7e7 40%, #e6e6e6 85%, #dcdcdc); color: #1a1a1a; }
.taskbar span { font-size: 15px; }
.weather { width: 490px; display: flex; padding-left: 21px; gap: 7px; align-items: center; }
.weather div, .lang, .clock { display: flex; flex-direction: column; line-height: 20px; letter-spacing: -.5px; margin-top: -4px; }
.weather svg { margin-top: -9px; }
.weather .dim { color: #555; letter-spacing: -.2px; }
.cell { width: 55px; height: 60px; display: flex; align-items: center; justify-content: center; position: relative; flex: none; }
.search { width: 273px; height: 39px; margin: 0 4.500px 0 4px; border-radius: 20px; border: 1px solid #d2d2d2; border-bottom-color: #aaa; background: #f7f7f7; display: flex; align-items: center; padding: 0 6px 0 13px; }
.search span { margin-left: 13px; font-size: 16px; letter-spacing: 0; color: #555; }
.trip { margin-left: auto; }
.apps { display: flex; }
.run { position: absolute; bottom: 6px; left: 24px; width: 8px; height: 4px; border-radius: 2px; background: #858585; }
.run.on { left: 17px; width: 20px; bottom: 5px; background: #0a7cd8; }
.chrome::before { content: ""; position: absolute; left: 3px; top: 6px; width: 49px; height: 48px; border-radius: 5px; background: #f6f6f6; border: 1px solid #ddd; }
.chrome svg { position: relative; }
.badge { position: absolute; left: 28px; top: 8px; width: 20px; height: 20px; border-radius: 50%; color: #fff; text-align: center; font-size: 14px; line-height: 20px; font-weight: 400; }
.blue { background: #0a78d4; }
.orange { background: #f4511e; font: 12px/21px Roboto, sans-serif; }
.tray { margin-left: auto; margin-right: 24px; display: flex; align-items: center; }
.sync { margin-left: 24px; }
.cloud { margin-left: 19px; }
.lang { width: 30px; margin-left: 22px; align-items: center; }
.lang { margin-top: -2px; }
.wifi { margin-left: 22px; }
.vol { margin-left: 10px; }
.bat { margin-left: 9px; }
.clock { width: 97px; align-items: flex-end; letter-spacing: 0; }
```
